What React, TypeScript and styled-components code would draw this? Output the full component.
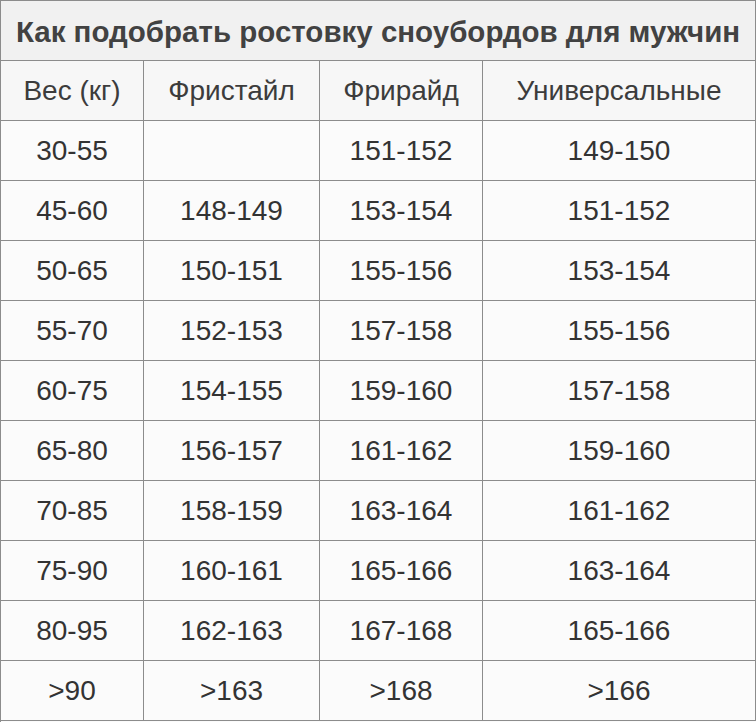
import React from 'react'
import styled, { createGlobalStyle } from 'styled-components'

const GlobalStyle = createGlobalStyle`
  html, body {
    margin: 0;
    padding: 0;
    background: #fff;
  }
`

const headers = ['Вес (кг)', 'Фристайл', 'Фрирайд', 'Универсальные']

const rows: string[][] = [
  ['30-55', '', '151-152', '149-150'],
  ['45-60', '148-149', '153-154', '151-152'],
  ['50-65', '150-151', '155-156', '153-154'],
  ['55-70', '152-153', '157-158', '155-156'],
  ['60-75', '154-155', '159-160', '157-158'],
  ['65-80', '156-157', '161-162', '159-160'],
  ['70-85', '158-159', '163-164', '161-162'],
  ['75-90', '160-161', '165-166', '163-164'],
  ['80-95', '162-163', '167-168', '165-166'],
  ['>90', '>163', '>168', '>166'],
]

const App = () => {
  return (
    <>
      <GlobalStyle />
      <Table>
        <Title>Как подобрать ростовку сноубордов для мужчин</Title>
        {headers.map((h) => (
          <Cell key={h} $head>{h}</Cell>
        ))}
        {rows.map((r, i) =>
          r.map((v, j) => <Cell key={i + '-' + j}>{v}</Cell>)
        )}
      </Table>
    </>
  )
}

const Table = styled.div`
  width: 756px;
  height: 722px;
  box-sizing: border-box;
  display: grid;
  grid-template-columns: 143px 176px 163px 1fr;
  grid-template-rows: repeat(12, 60px);
  border-top: 1px solid #8c8c8c;
  border-left: 1px solid #8c8c8c;
  background: #fbfbfb;
  font-family: 'Liberation Sans', Arial, sans-serif;
`

const Title = styled.div`
  grid-column: 1 / -1;
  display: flex;
  align-items: center;
  justify-content: center;
  background: #f1f1f1;
  border-right: 1px solid #8c8c8c;
  border-bottom: 1px solid #8c8c8c;
  font-size: 29.5px;
  font-weight: 700;
  color: #424242;
  padding-top: 2px;
  box-sizing: border-box;
  white-space: nowrap;
`

const Cell = styled.div<{ $head?: boolean }>`
  display: flex;
  align-items: center;
  justify-content: center;
  border-right: 1px solid #8c8c8c;
  border-bottom: 1px solid #8c8c8c;
  font-size: 28px;
  color: ${({ $head }) => ($head ? '#3c3c3c' : '#333')};
  background: ${({ $head }) => ($head ? '#f7f7f7' : '#fbfbfb')};
  box-sizing: border-box;
`

export default App
